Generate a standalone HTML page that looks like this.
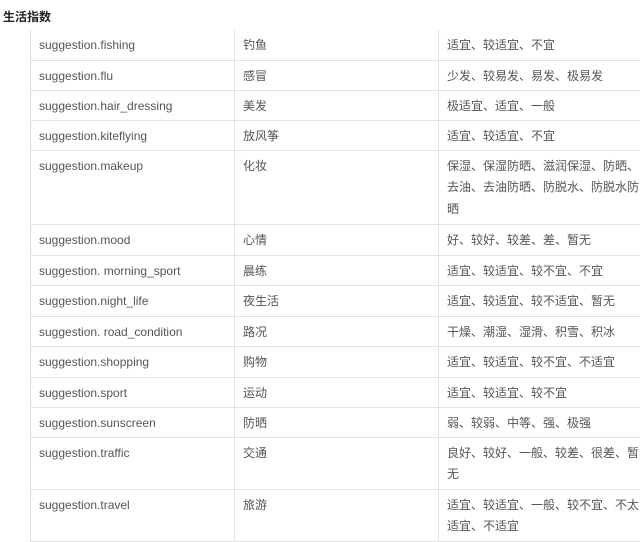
<!DOCTYPE html>
<html><head><meta charset="utf-8"><style>
body{margin:0;width:640px;height:523px;overflow:hidden;background:#fff;font-family:"Liberation Sans","Noto Sans CJK SC",sans-serif;}
.t{position:absolute;left:3px;top:8px;font-size:12px;font-weight:bold;color:#222;}
table{position:absolute;left:30px;top:30px;border-collapse:collapse;width:620px;table-layout:fixed;font-size:12px;color:#555;}
td{border:1px solid #e2e2e2;border-top:none;padding:0 8px;vertical-align:top;line-height:21.5px;padding-top:5px;padding-bottom:0;}
td:first-child{border-left:1px solid #ddd;}
</style></head><body>
<div class="t">生活指数</div>
<table>
<colgroup><col style="width:204px"><col style="width:204px"><col></colgroup>
<tr style="height:30px"><td>suggestion.fishing</td><td>钓鱼</td><td>适宜、较适宜、不宜</td></tr>
<tr style="height:30px"><td>suggestion.flu</td><td>感冒</td><td>少发、较易发、易发、极易发</td></tr>
<tr style="height:30px"><td>suggestion.hair_dressing</td><td>美发</td><td>极适宜、适宜、一般</td></tr>
<tr style="height:30px"><td>suggestion.kiteflying</td><td>放风筝</td><td>适宜、较适宜、不宜</td></tr>
<tr style="height:74px"><td>suggestion.makeup</td><td>化妆</td><td>保湿、保湿防晒、滋润保湿、防晒、<br>去油、去油防晒、防脱水、防脱水防<br>晒</td></tr>
<tr style="height:31px"><td>suggestion.mood</td><td>心情</td><td>好、较好、较差、差、暂无</td></tr>
<tr style="height:30px"><td>suggestion. morning_sport</td><td>晨练</td><td>适宜、较适宜、较不宜、不宜</td></tr>
<tr style="height:31px"><td>suggestion.night_life</td><td>夜生活</td><td>适宜、较适宜、较不适宜、暂无</td></tr>
<tr style="height:30px"><td>suggestion. road_condition</td><td>路况</td><td>干燥、潮湿、湿滑、积雪、积冰</td></tr>
<tr style="height:31px"><td>suggestion.shopping</td><td>购物</td><td>适宜、较适宜、较不宜、不适宜</td></tr>
<tr style="height:30px"><td>suggestion.sport</td><td>运动</td><td>适宜、较适宜、较不宜</td></tr>
<tr style="height:30px"><td>suggestion.sunscreen</td><td>防晒</td><td>弱、较弱、中等、强、极强</td></tr>
<tr style="height:52px"><td>suggestion.traffic</td><td>交通</td><td>良好、较好、一般、较差、很差、暂<br>无</td></tr>
<tr style="height:52px"><td>suggestion.travel</td><td>旅游</td><td>适宜、较适宜、一般、较不宜、不太<br>适宜、不适宜</td></tr>
</table>
</body></html>
